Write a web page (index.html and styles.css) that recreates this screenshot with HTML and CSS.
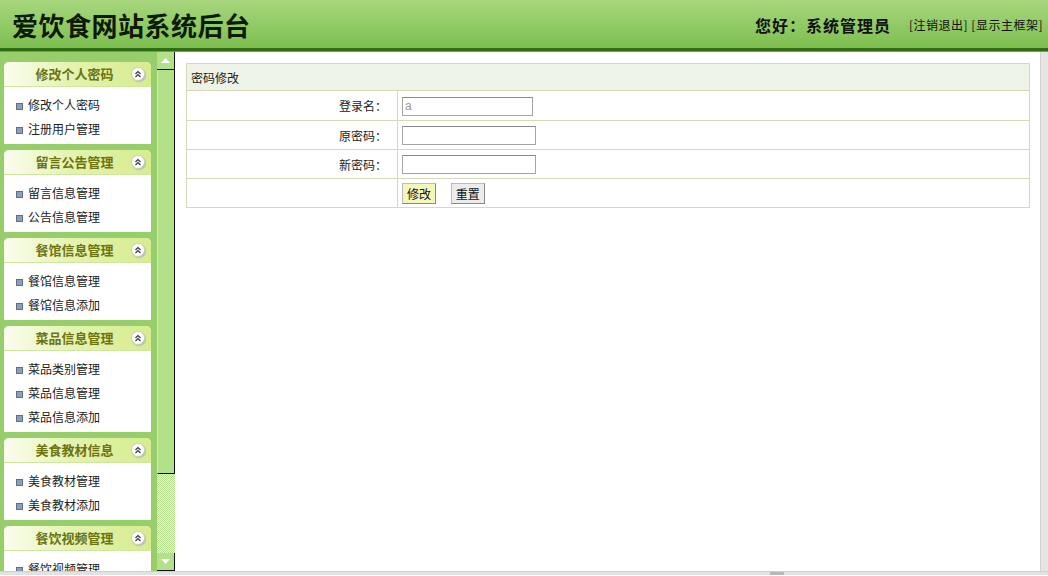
FILE: index.html
```html
<!DOCTYPE html>
<html lang="zh-CN">

<head>
    <meta charset="utf-8">
    <title>爱饮食网站系统后台</title>
    <link rel="stylesheet" href="styles.css">
</head>

<body>
    <div class="top">
        <div class="logo">爱饮食网站系统后台</div>
        <div class="user-info">
            <span class="hello">您好：系统管理员</span>
            <span class="links">[<a href="#">注销退出</a>] [<a href="#">显示主框架</a>]</span>
        </div>
    </div>
    <div class="top-line"></div>

    <div class="main">
        <div class="side">
            <div class="panel">
                <div class="panel-title">修改个人密码<span class="toggle"><svg width="8" height="8" viewBox="0 0 8 8"><path d="M1.5 4 L4 1.5 L6.5 4 M1.5 7 L4 4.5 L6.5 7" fill="none" stroke="#333" stroke-width="1.1"/></svg></span></div>
                <ul class="menu">
                    <li><a href="#">修改个人密码</a></li>
                    <li><a href="#">注册用户管理</a></li>
                </ul>
            </div>
            <div class="panel">
                <div class="panel-title">留言公告管理<span class="toggle"><svg width="8" height="8" viewBox="0 0 8 8"><path d="M1.5 4 L4 1.5 L6.5 4 M1.5 7 L4 4.5 L6.5 7" fill="none" stroke="#333" stroke-width="1.1"/></svg></span></div>
                <ul class="menu">
                    <li><a href="#">留言信息管理</a></li>
                    <li><a href="#">公告信息管理</a></li>
                </ul>
            </div>
            <div class="panel">
                <div class="panel-title">餐馆信息管理<span class="toggle"><svg width="8" height="8" viewBox="0 0 8 8"><path d="M1.5 4 L4 1.5 L6.5 4 M1.5 7 L4 4.5 L6.5 7" fill="none" stroke="#333" stroke-width="1.1"/></svg></span></div>
                <ul class="menu">
                    <li><a href="#">餐馆信息管理</a></li>
                    <li><a href="#">餐馆信息添加</a></li>
                </ul>
            </div>
            <div class="panel">
                <div class="panel-title">菜品信息管理<span class="toggle"><svg width="8" height="8" viewBox="0 0 8 8"><path d="M1.5 4 L4 1.5 L6.5 4 M1.5 7 L4 4.5 L6.5 7" fill="none" stroke="#333" stroke-width="1.1"/></svg></span></div>
                <ul class="menu">
                    <li><a href="#">菜品类别管理</a></li>
                    <li><a href="#">菜品信息管理</a></li>
                    <li><a href="#">菜品信息添加</a></li>
                </ul>
            </div>
            <div class="panel">
                <div class="panel-title">美食教材信息<span class="toggle"><svg width="8" height="8" viewBox="0 0 8 8"><path d="M1.5 4 L4 1.5 L6.5 4 M1.5 7 L4 4.5 L6.5 7" fill="none" stroke="#333" stroke-width="1.1"/></svg></span></div>
                <ul class="menu">
                    <li><a href="#">美食教材管理</a></li>
                    <li><a href="#">美食教材添加</a></li>
                </ul>
            </div>
            <div class="panel">
                <div class="panel-title">餐饮视频管理<span class="toggle"><svg width="8" height="8" viewBox="0 0 8 8"><path d="M1.5 4 L4 1.5 L6.5 4 M1.5 7 L4 4.5 L6.5 7" fill="none" stroke="#333" stroke-width="1.1"/></svg></span></div>
                <ul class="menu">
                    <li><a href="#">餐饮视频管理</a></li>
                    <li><a href="#">餐饮视频添加</a></li>
                </ul>
            </div>
        </div>

        <div class="side-scroll">
            <div class="arrow"><svg width="9" height="5" viewBox="0 0 9 5"><path d="M0 5 L4.5 0 L9 5 Z" fill="#fff"/></svg></div>
            <div class="thumb"></div>
            <div class="track"></div>
            <div class="arrow"><svg width="9" height="5" viewBox="0 0 9 5"><path d="M0 0 L4.5 5 L9 0 Z" fill="#fff"/></svg></div>
        </div>

        <div class="content">
            <form>
                <table class="form-table">
                    <tr>
                        <th colspan="2">密码修改</th>
                    </tr>
                    <tr class="first-row">
                        <td class="label">登录名：</td>
                        <td><input type="text" class="input input-short" value="a" readonly></td>
                    </tr>
                    <tr>
                        <td class="label">原密码：</td>
                        <td><input type="password" class="input"></td>
                    </tr>
                    <tr>
                        <td class="label">新密码：</td>
                        <td><input type="password" class="input"></td>
                    </tr>
                    <tr>
                        <td class="label"></td>
                        <td>
                            <button type="button" class="btn btn-ok">修改</button>
                            <button type="reset" class="btn">重置</button>
                        </td>
                    </tr>
                </table>
            </form>
        </div>

        <div class="page-scroll"></div>
    </div>
    <div class="bottom-scroll"><span class="bottom-thumb"></span></div>
</body>

</html>
```

FILE: styles.css
```css
* {
    box-sizing: border-box;
}

body {
    margin: 0;
    width: 1048px;
    height: 576px;
    overflow: hidden;
    font-family: "Noto Sans CJK SC", "Liberation Sans", sans-serif;
    font-size: 12px;
    color: #222;
    background: #fff;
}

a {
    color: #222;
    text-decoration: none;
}

/* header */
.top {
    height: 48px;
    display: flex;
    align-items: center;
    justify-content: space-between;
    padding: 0 5px 0 12px;
    background: linear-gradient(to bottom, #a8d67e, #7dbf4f);
}

.logo {
    font-size: 26px;
    font-weight: 700;
    color: #0d1a05;
    letter-spacing: 0.5px;
    line-height: 1;
    padding-top: 2px;
}

.user-info {
    display: flex;
    align-items: center;
    gap: 18px;
    padding-top: 1px;
}

.hello {
    font-size: 16px;
    font-weight: 700;
    letter-spacing: 1px;
    color: #111;
}

.links {
    font-size: 12px;
    letter-spacing: 0.5px;
    color: #111;
}

.links a {
    color: #111;
}

.top-line {
    height: 4px;
    background: #2f6c14;
    border-bottom: 1px solid #6aa845;
}

/* main area */
.main {
    display: flex;
    height: 519px;
}

.side {
    width: 157px;
    background: #98cd6c;
    padding: 10px 6px 0 4px;
    overflow: hidden;
}

.panel {
    background: #fff;
    border-radius: 5px 5px 0 0;
    margin-bottom: 6px;
}

.panel-title {
    height: 25px;
    line-height: 24px;
    text-align: center;
    font-size: 13px;
    font-weight: 700;
    color: #6c7410;
    padding-right: 6px;
    border-radius: 5px 5px 0 0;
    border-bottom: 1px solid #cfe6a0;
    background: linear-gradient(to right, #fbfdf0, #e4f3b0 45%, #d6ec8e);
    position: relative;
}

.toggle {
    position: absolute;
    right: 6px;
    top: 5px;
    width: 14px;
    height: 14px;
    border-radius: 50%;
    background: #fff;
    border: 1px solid #c9cfc0;
    box-shadow: 1px 1px 1px #b8c0a8;
    display: flex;
    align-items: center;
    justify-content: center;
}

.menu {
    list-style-type: none;
    margin: 0;
    padding: 6px 0 3px 0;
}

.menu li {
    height: 24px;
    line-height: 24px;
    padding-left: 24px;
    position: relative;
}

.menu li:before {
    content: "";
    position: absolute;
    left: 12px;
    top: 10px;
    width: 5px;
    height: 5px;
    background: #8d9fb8;
    border: 1px solid #5d6f86;
}

/* custom scrollbar of the left frame */
.side-scroll {
    width: 18px;
    display: flex;
    flex-direction: column;
    background: #aede82;
}

.arrow {
    height: 18px;
    display: flex;
    align-items: center;
    justify-content: center;
    background: #b4e08a;
    border-right: 1px solid #111;
    border-bottom: 1px solid #111;
}

.thumb {
    height: 404px;
    background: #b4e08a;
    border-right: 1px solid #111;
    border-bottom: 1px solid #111;
    border-left: 1px solid #c8eaa6;
}

.track {
    flex: 1;
    background-color: #eaf6dc;
    background-image: repeating-conic-gradient(#b6df90 0 25%, #eaf6dc 0 50%);
    background-size: 2px 2px;
}

/* content frame */
.content {
    flex: 1;
    padding: 11px 10px 0 11px;
}

.form-table {
    width: 844px;
    border-collapse: collapse;
    font-size: 12px;
}

.form-table th {
    height: 27px;
    text-align: left;
    font-weight: normal;
    padding-left: 4px;
    background: #eef3e8;
    border: 1px solid #d6dab8;
}

.form-table td {
    height: 29px;
    border: 1px solid #d6dab8;
    padding: 0 4px;
}

.form-table .first-row td {
    height: 30px;
}

.form-table .label {
    width: 211px;
    text-align: right;
    padding-right: 10px;
}

.input {
    width: 134px;
    height: 19px;
    border: 1px solid #a5a5a5;
    border-top-color: #8a8a8a;
    font-family: "Liberation Sans", sans-serif;
    font-size: 12px;
    color: #999;
    padding: 0 2px;
    vertical-align: middle;
}

.input-short {
    width: 131px;
}

.btn {
    height: 21px;
    padding: 0 4px;
    margin-right: 12px;
    font-family: "Noto Sans CJK SC", sans-serif;
    font-size: 12px;
    color: #111;
    background: #ececec;
    border: 1px solid #888;
    border-top-color: #bbb;
    border-left-color: #bbb;
    vertical-align: middle;
    line-height: 17px;
}

.btn-ok {
    background: #f3f7bc;
}

.page-scroll {
    width: 8px;
    background: #e6e6e6;
    border-left: 1px solid #d2d2d2;
}

.bottom-scroll {
    height: 4px;
    background: #e2e2e2;
    border-top: 1px solid #d0d0d0;
    position: relative;
}

.bottom-thumb {
    position: absolute;
    left: 770px;
    top: 0;
    width: 14px;
    height: 3px;
    background: #b8b8b8;
}
```
